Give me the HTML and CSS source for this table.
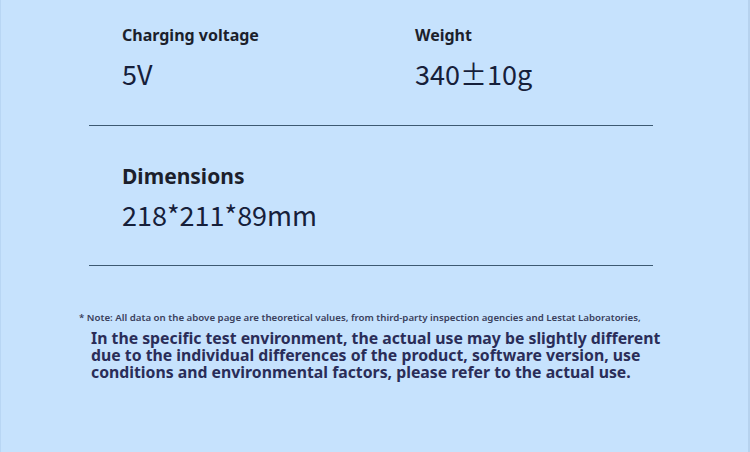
FILE: index.html
```html
<!DOCTYPE html>
<html>
<head>
<meta charset="utf-8">
<link rel="stylesheet" href="styles.css">
</head>
<body>
<div class="page">
  <div class="specs">
    <div class="row two">
      <div class="item">
        <div class="label">Charging voltage</div>
        <div class="value">5V</div>
      </div>
      <div class="item">
        <div class="label">Weight</div>
        <div class="value">340±10g</div>
      </div>
    </div>
    <div class="row">
      <div class="item">
        <div class="label big">Dimensions</div>
        <div class="value">218*211*89mm</div>
      </div>
    </div>
  </div>
  <div class="notes">
    <p class="small">* Note: All data on the above page are theoretical values, from third-party inspection agencies and Lestat Laboratories,</p>
    <p class="main">In the specific test environment, the actual use may be slightly different due to the individual differences of the product, software version, use conditions and environmental factors, please refer to the actual use.</p>
  </div>
</div>
</body>
</html>
```
FILE: styles.css
```css
html, body {
  margin: 0;
  padding: 0;
}
body {
  width: 750px;
  height: 452px;
  overflow: hidden;
  background: #c6e2fd;
  font-family: "Noto Sans", sans-serif;
}
.page {
  box-sizing: border-box;
  height: 452px;
  border-left: 1px solid #b8d6f4;
  border-right: 2px solid #b6d2ee;
  padding-top: 24px;
}
.specs {
  margin: 0 95px 0 88px;
}
.row {
  display: flex;
  border-bottom: 1px solid #3d5a72;
  padding-left: 33px;
  height: 101px;
}
.row + .row {
  height: 102px;
  padding-top: 37px;
}
.item {
  width: 293px;
  flex-shrink: 0;
}
.label {
  font-size: 16px;
  font-weight: 700;
  color: #1c1f2c;
  line-height: 22px;
}
.label.big {
  font-size: 21px;
  line-height: 26px;
}
.value {
  font-family: "Noto Sans CJK SC", "Noto Sans", sans-serif;
  font-size: 27px;
  font-weight: 400;
  color: #16203a;
  line-height: 36px;
  margin-top: 10px;
}
.row + .row .value {
  margin-top: 8px;
}
.notes {
  padding: 46px 0 0 78px;
}
.small {
  margin: 0;
  font-size: 9.7px;
  font-weight: 600;
  color: #3a3f5c;
  line-height: 12px;
  white-space: nowrap;
}
.main {
  margin: 6px 70px 0 12px;
  font-size: 15.8px;
  font-weight: 700;
  color: #2a2d58;
  line-height: 17px;
}
```
